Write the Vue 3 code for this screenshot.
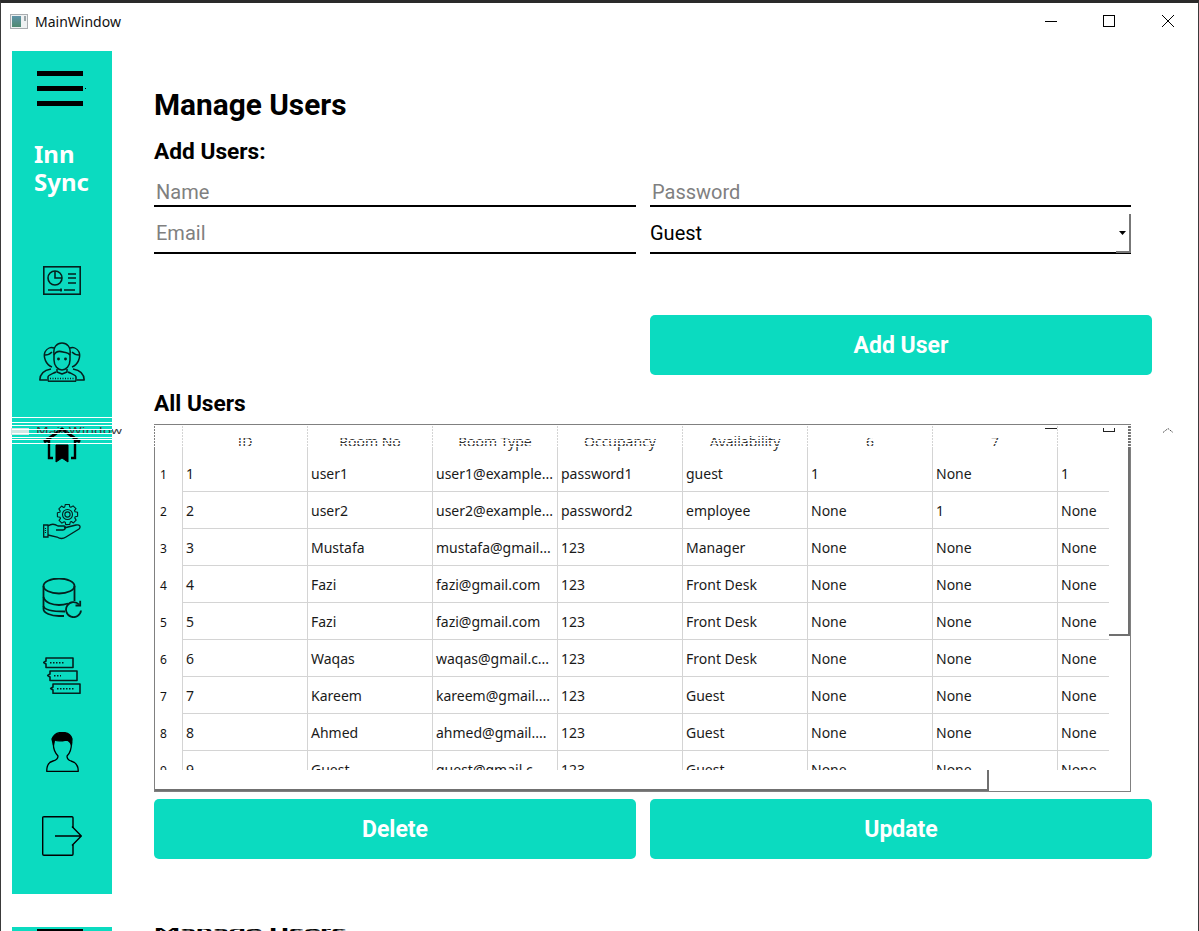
<script setup>
const columns = ['ID', 'Room No', 'Room Type', 'Occupancy', 'Availability', '6', '7', '']
const rows = [
  ['1', 'user1', 'user1@example...', 'password1', 'guest', '1', 'None', '1'],
  ['2', 'user2', 'user2@example...', 'password2', 'employee', 'None', '1', 'None'],
  ['3', 'Mustafa', 'mustafa@gmail...', '123', 'Manager', 'None', 'None', 'None'],
  ['4', 'Fazi', 'fazi@gmail.com', '123', 'Front Desk', 'None', 'None', 'None'],
  ['5', 'Fazi', 'fazi@gmail.com', '123', 'Front Desk', 'None', 'None', 'None'],
  ['6', 'Waqas', 'waqas@gmail.c...', '123', 'Front Desk', 'None', 'None', 'None'],
  ['7', 'Kareem', 'kareem@gmail....', '123', 'Guest', 'None', 'None', 'None'],
  ['8', 'Ahmed', 'ahmed@gmail....', '123', 'Guest', 'None', 'None', 'None'],
  ['9', 'Guest', 'guest@gmail.c...', '123', 'Guest', 'None', 'None', 'None']
]

function gearPath(cx, cy, rOuter, rInner, teeth) {
  const pts = []
  const step = (Math.PI * 2) / teeth
  for (let i = 0; i < teeth; i++) {
    const a = i * step
    const offs = [[-0.5, rInner], [-0.3, rOuter], [0.25, rOuter], [0.4, rInner]]
    for (const [o, r] of offs) {
      const t = a + o * step * 0.9
      pts.push((cx + r * Math.cos(t)).toFixed(2) + ' ' + (cy + r * Math.sin(t)).toFixed(2))
    }
  }
  return 'M' + pts.join('L') + 'Z'
}
const gear = gearPath(24.5, 10.5, 10.3, 8, 8)
</script>

<template>
  <div class="window">
    <header class="titlebar">
      <svg class="app-icon" width="18" height="15" viewBox="0 0 18 15">
        <defs>
          <linearGradient id="appfill" x1="0" y1="0" x2="0" y2="1">
            <stop offset="0" stop-color="#5f93a8" />
            <stop offset="1" stop-color="#4f8a70" />
          </linearGradient>
        </defs>
        <rect x="0.5" y="0.5" width="17" height="14" fill="#eef1f2" stroke="#a9adb0" />
        <rect x="2" y="2" width="9" height="11" fill="url(#appfill)" />
        <rect x="14" y="2" width="2" height="5" fill="#9aa5a8" />
      </svg>
      <span class="app-name">MainWindow</span>
      <div class="controls">
        <span class="control">
          <svg width="12" height="12" viewBox="0 0 12 12"><path d="M0 6.5H12" stroke="#000" /></svg>
        </span>
        <span class="control">
          <svg width="12" height="12" viewBox="0 0 12 12"><rect x="0.5" y="0.5" width="11" height="11" fill="none" stroke="#000" /></svg>
        </span>
        <span class="control">
          <svg width="12" height="12" viewBox="0 0 12 12"><path d="M0 0L12 12M12 0L0 12" stroke="#000" /></svg>
        </span>
      </div>
    </header>

    <div class="content">
      <aside class="sidebar">
        <svg class="menu-icon" width="50" height="35" viewBox="0 0 50 35">
          <path d="M0 0H46V5H0ZM0 15H46V20H0ZM0 30H46V35H0Z" fill="#000" />
          <rect x="48" y="17" width="1" height="1" fill="#000" />
        </svg>
        <div class="brand">Inn<br />Sync</div>
        <nav class="nav">
          <!-- dashboard -->
          <span class="nav-slot">
            <svg width="38" height="29" viewBox="0 0 38 29" fill="none" stroke="#05201e" stroke-width="1.600">
              <rect x="0.800" y="0.800" width="36.400" height="27.400" />
              <circle cx="12" cy="12" r="7" />
              <path d="M12 5V12H19" />
              <path d="M25 8H33M25 12H33M25 17H33" />
              <path d="M5 24H19M21 24H32" />
              <path d="M18 22.500V25.500" />
            </svg>
          </span>
          <!-- users -->
          <span class="nav-slot">
            <svg width="46" height="40" viewBox="0 0 46 40" fill="none" stroke="#05201e" stroke-width="1.500" stroke-linejoin="round">
              <path d="M13 25C7 23 4 15 6 10C8 6 12 5 15 6" />
              <path d="M33 25C39 23 42 15 40 10C38 6 34 5 31 6" />
              <path d="M6 13C9 13 11 12 13 10" />
              <path d="M40 13C37 13 35 12 33 10" />
              <path d="M15 12C14 5 18 1 23 1C28 1 32 5 31 12V18C31 24 27 28 23 28C19 28 15 24 15 18Z" />
              <path d="M15 13C17 9 21 9 24 10C27 11 29 10 31 13" />
              <path d="M18 27L18 30L23 32L28 30L28 27" />
              <path d="M12 27C6 28 1 31 0.800 38H8M34 27C40 28 45 31 45.200 38H38" />
              <path d="M9 39.200V35C9 33 13 32 17 30M37 39.200V35C37 33 33 32 29 30" />
              <path d="M9 39.200H37" />
              <path d="M11 36.500H35" stroke-dasharray="1 1.500" />
              <circle cx="19.500" cy="17" r="0.700" />
              <circle cx="26.500" cy="17" r="0.700" />
            </svg>
          </span>
          <!-- home -->
          <span class="nav-slot">
            <svg width="38" height="36" viewBox="0 0 38 36" fill="none" stroke="#000" stroke-width="2.400">
              <path d="M1 15L19 2L37 15" stroke-width="3" />
              <path d="M1 14H6V31H10M37 14H32V31H28" />
              <path d="M13 18H25V35L19 31L13 35Z" fill="#000" stroke-width="1" />
            </svg>
          </span>
          <!-- hand and gear -->
          <span class="nav-slot">
            <svg width="38" height="36" viewBox="0 0 38 36" fill="none" stroke="#05201e" stroke-width="1.100">
              <path :d="gear" stroke-linejoin="round" />
              <circle cx="24.500" cy="10.500" r="5" />
              <circle cx="24.500" cy="10.500" r="2.600" />
              <path d="M0.700 21H5V33H0.700Z" stroke-width="1.300" />
              <path d="M5 22C9 19 12 20 15 22H21C23 22 23 26 20 26H13" stroke-width="1.300" />
              <path d="M21 24L33 21C37 20 38 23 36 25L23 33C20 35 17 35 14 33L5 31" stroke-width="1.300" />
              <path d="M2.500 24V30" stroke-dasharray="1 1" />
            </svg>
          </span>
          <!-- database -->
          <span class="nav-slot">
            <svg width="40" height="40" viewBox="0 0 40 40" fill="none" stroke="#05201e" stroke-width="1.800">
              <ellipse cx="17" cy="8" rx="15.500" ry="7.500" />
              <path d="M1.500 8V31C1.500 35 9 38 17 38H22" />
              <path d="M32.500 8V23" />
              <path d="M1.500 19C3 25 11 27 17 27C20 27 23 26.500 26 25.500" />
              <path d="M1.500 28C2 32 10 33.500 23 33.500" />
              <path d="M39 32.500A7.500 7.500 0 1 1 37 26.500" />
              <path d="M38.200 22.800V27.500H33.500" />
            </svg>
          </span>
          <!-- tags -->
          <span class="nav-slot">
            <svg width="38" height="37" viewBox="0 0 38 37" fill="none" stroke="#05201e" stroke-width="1.600" stroke-linejoin="round">
              <path d="M3 1H30V10.500H3V7L0.700 5.500L3 4Z" />
              <path d="M7 14H34V23.500H7V20L4.700 18.500L7 17Z" />
              <path d="M10 27H37V36.300H10V33L7.700 31.500L10 30Z" />
              <path d="M7 5.700H21M11 18.700H18M14 31.700H31" stroke-width="1.500" stroke-dasharray="1.500 1.500" />
            </svg>
          </span>
          <!-- person -->
          <span class="nav-slot">
            <svg width="33" height="40" viewBox="0 0 33 40" fill="none" stroke="#000" stroke-width="1.300" stroke-linejoin="round">
              <path d="M6 7C8 2 13 0 18 0.500C22 1 25 3 26 7L25.500 13C24 9 22 8 20 8C16 9 11 9 8.500 8L7.500 13Z" fill="#000" />
              <path d="M7.500 10C7 15 8 20 12 24C12 26 11 28 7 29C3 30 0.700 33 0.700 39.300H32.300C32.300 33 29 30 25 29C22 28 21 26 21 24C24.500 21 25.500 15 25.500 10" />
            </svg>
          </span>
          <!-- sign out -->
          <span class="nav-slot">
            <svg width="40" height="40" viewBox="0 0 40 40" fill="none" stroke="#000" stroke-width="1.400" stroke-linejoin="round">
              <path d="M31 12V2C31 1 30.500 0.700 30 0.700H2C1 0.700 0.700 1 0.700 2V38C0.700 39 1 39.300 2 39.300H30C30.500 39.300 31 39 31 38V29" />
              <path d="M13 20H39M30 10.500L39.300 20L30 29.500" />
            </svg>
          </span>
        </nav>
      </aside>

      <main class="main">
        <h1 class="page-title">Manage Users</h1>
        <h2 class="section-title">Add Users:</h2>

        <div class="form-grid">
          <input class="field field-first" placeholder="Name" />
          <input class="field field-first" placeholder="Password" />
          <input class="field field-tall" placeholder="Email" />
          <div class="select">
            <span>Guest</span>
            <svg class="select-arrow" width="7" height="4" viewBox="0 0 7 4"><path d="M0 0H7L3.500 4Z" fill="#000" /></svg>
            <span class="select-corner"></span>
          </div>
        </div>

        <div class="add-row">
          <button class="action">Add User</button>
        </div>

        <h2 class="section-title all-users">All Users</h2>

        <section class="table">
          <div class="table-row table-head">
            <span class="gutter"></span>
            <span v-for="(c, i) in columns" :key="i" class="cell head-cell">{{ c }}</span>
          </div>
          <div class="table-body">
            <div v-for="r in rows" :key="r[0]" class="table-row">
              <span class="gutter">{{ r[0] }}</span>
              <span v-for="(v, i) in r" :key="i" class="cell body-cell">{{ v }}</span>
            </div>
          </div>
          <span class="scroll-v"></span>
          <span class="scroll-h"></span>
          <span class="head-stripes"></span>
        </section>

        <div class="actions">
          <button class="action">Delete</button>
          <button class="action">Update</button>
        </div>
      </main>
    </div>

    <div class="echo">
      <div class="echo-bar"><span class="echo-menu"></span></div>
      <div class="echo-title">Manage Users</div>
    </div>

    <div class="ghost-band">
      <span class="ghost-icon"></span>
      <span class="ghost-title">MainWindow</span>
    </div>
    <span class="ghost-min"></span>
    <span class="ghost-max"></span>
    <svg class="ghost-close" width="12" height="5" viewBox="0 0 12 5"><path d="M1 4.500L6 0.500L11 4.500" fill="none" stroke="#555" stroke-dasharray="2 1" /></svg>
  </div>
</template>

<style scoped>
.window {
  position: relative;
  box-sizing: border-box;
  width: 1199px;
  height: 931px;
  overflow: hidden;
  background: #fff;
  border-top: 3px solid #2a2a2a;
  border-left: 1px solid #3a3a3a;
  border-right: 1px solid #3a3a3a;
  font-family: "Roboto", sans-serif;
  color: #000;
}
.titlebar {
  display: flex;
  align-items: center;
  height: 36px;
  padding-left: 9px;
}
.app-icon { margin-right: 7px; }
.app-name {
  font-family: "Noto Sans", sans-serif;
  font-size: 14px;
  color: #111;
}
.controls { display: flex; margin-left: auto; margin-right: 1px; }
.control {
  display: flex;
  align-items: center;
  justify-content: center;
  width: 58.500px;
  height: 36px;
}
.content {
  display: flex;
  height: 843px;
  margin-top: 12px;
  padding-left: 11px;
}
.sidebar {
  display: flex;
  flex-direction: column;
  box-sizing: border-box;
  width: 100px;
  height: 843px;
  padding-top: 20px;
  background: #0bdbc0;
}
.menu-icon { margin-left: 25px; }
.brand {
  margin: 34px 0 0 22px;
  font-family: "Noto Sans", sans-serif;
  font-weight: 700;
  font-size: 24px;
  line-height: 28px;
  color: #fff;
}
.nav {
  display: grid;
  grid-template-rows: 78px 86px 80px 74px 78px 76px 78px 90px;
  margin-top: 45px;
}
.nav-slot {
  display: flex;
  align-items: center;
  justify-content: center;
}
.main {
  display: flex;
  flex-direction: column;
  width: 998px;
  margin-left: 42px;
  padding-top: 36px;
}
.page-title {
  margin: 0;
  font-size: 29.800px;
  line-height: 36px;
  font-weight: 700;
}
.section-title {
  margin: 16px 0 0;
  font-size: 22.700px;
  line-height: 26px;
  font-weight: 700;
}
.form-grid {
  display: grid;
  grid-template-columns: 482px 481px;
  grid-template-rows: 32px 42px;
  column-gap: 14px;
  row-gap: 5px;
  margin-top: 10px;
}
.field {
  box-sizing: border-box;
  width: 100%;
  height: 100%;
  padding: 0 0 0 2px;
  border: 0;
  border-bottom: 2px solid #000;
  outline: none;
  background: transparent;
  font-family: "Roboto", sans-serif;
  font-size: 20px;
  color: #000;
}
.field-first { padding-top: 4px; }
.field-tall { padding-top: 2px; }
.field::placeholder { color: #808080; opacity: 1; }
.select {
  position: relative;
  display: flex;
  align-items: center;
  justify-content: space-between;
  box-sizing: border-box;
  padding-top: 2px;
  border-bottom: 2px solid #000;
  font-size: 20px;
}
.select-arrow { margin-right: 5px; }
.select-corner {
  position: absolute;
  right: 0;
  bottom: -1px;
  width: 15px;
  height: 39px;
  border-right: 2px solid #777;
  border-bottom: 2px solid #777;
  box-sizing: border-box;
}
.add-row {
  display: flex;
  justify-content: flex-end;
  margin-top: 61px;
}
.action {
  height: 60px;
  border: 0;
  border-radius: 5px;
  background: #0bdbc0;
  color: #fff;
  font-family: "Roboto", sans-serif;
  font-size: 23px;
  font-weight: 700;
}
.add-row .action { width: 502px; }
.table {
  position: relative;
  box-sizing: border-box;
  width: 977px;
  height: 368px;
  margin-top: 7px;
  border: 1px solid #808080;
  font-family: "Noto Sans", sans-serif;
  background: #fff;
}
.table-row {
  display: grid;
  grid-template-columns: 27px repeat(7, 125px) 52px;
  height: 37px;
  width: 954px;
  box-sizing: border-box;
}
.table-head { height: 30px; }
.table-body {
  height: 315px;
  overflow: hidden;
}
.gutter {
  display: flex;
  align-items: center;
  padding: 1px 0 0 5px;
  font-size: 12px;
  color: #111;
}
.cell {
  box-sizing: border-box;
  overflow: hidden;
  white-space: nowrap;
  border-left: 1px solid #d4d4d4;
  font-size: 14px;
  color: #1a1a1a;
}
.body-cell {
  display: flex;
  align-items: center;
  padding: 1px 0 0 3px;
  border-bottom: 1px solid #d4d4d4;
}
.head-cell {
  display: flex;
  align-items: center;
  justify-content: center;
  padding-top: 2px;
  color: #333;
}
.scroll-v {
  position: absolute;
  top: 0;
  right: 0;
  width: 21px;
  height: 211px;
  box-sizing: border-box;
  border-right: 2px solid #707070;
  border-bottom: 2px solid #707070;
}
.scroll-h {
  position: absolute;
  left: 0;
  bottom: 0;
  width: 834px;
  height: 21px;
  box-sizing: border-box;
  border-right: 2px solid #707070;
  border-bottom: 2px solid #707070;
}
.head-stripes {
  position: absolute;
  top: 0;
  left: -1px;
  right: -1px;
  height: 22px;
  background: repeating-linear-gradient(to bottom, #fff 0, #fff 1px, transparent 1px, transparent 3px);
}
.actions {
  display: grid;
  grid-template-columns: 482px 502px;
  column-gap: 14px;
  margin-top: 7px;
}
.echo {
  display: flex;
  margin-top: 33px;
  padding-left: 11px;
  height: 10px;
}
.echo-bar {
  width: 100px;
  height: 10px;
  background: #0bdbc0;
}
.echo-menu {
  display: block;
  width: 46px;
  height: 5px;
  margin: 2px 0 0 25px;
  background: #000;
}
.echo-title {
  margin: 0 0 0 42px;
  font-size: 29.800px;
  font-weight: 700;
  line-height: 22px;
  height: 22px;
  transform: scaleY(0.27);
  transform-origin: top left;
}
.ghost-band {
  position: absolute;
  top: 414px;
  left: 9px;
  width: 113px;
  height: 27px;
  display: flex;
  align-items: center;
  overflow: hidden;
}
.ghost-band::after {
  content: "";
  position: absolute;
  top: 0;
  left: 2px;
  width: 111px;
  height: 27px;
  background:
    linear-gradient(to bottom,
      #fff 0 1px, transparent 1px 5px,
      #fff 5px 6px, transparent 6px 8px,
      #fff 8px 9px, transparent 9px 12px,
      #fff 12px 13px, transparent 13px 16px,
      #fff 16px 17px, transparent 17px 20px,
      #fff 20px 21px, transparent 21px 22px,
      #fff 22px 23px, transparent 23px 26px,
      #fff 26px 27px);
  background-size: 100px 27px;
  background-repeat: no-repeat;
}
.ghost-icon {
  position: absolute;
  top: 11px;
  left: 1px;
  width: 18px;
  height: 7px;
  background: #cfe7e4;
}
.ghost-title {
  position: absolute;
  top: 4px;
  left: 26px;
  font-family: "Noto Sans", sans-serif;
  font-size: 14px;
  line-height: 20px;
  color: #3a3a3a;
  transform: scaleY(0.6);
}
.ghost-min {
  position: absolute;
  top: 425px;
  left: 1044px;
  width: 12px;
  height: 1px;
  background: #222;
}
.ghost-max {
  position: absolute;
  top: 425px;
  left: 1102px;
  width: 12px;
  height: 4px;
  box-sizing: border-box;
  border: 1px solid #222;
  border-top: 0;
}
.ghost-close {
  position: absolute;
  top: 425px;
  left: 1161px;
}
</style>

<style>
html, body { margin: 0; background: #fff; overflow: hidden; }
</style>
